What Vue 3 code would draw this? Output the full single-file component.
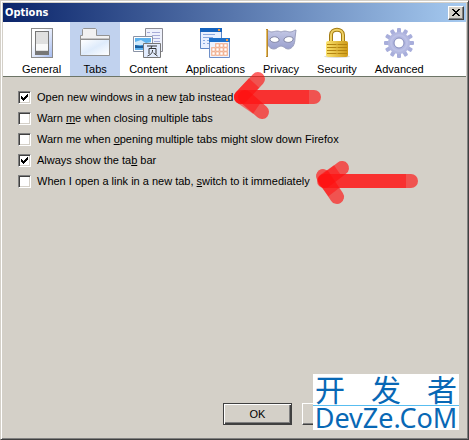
<template>
  <div class="window">
    <header class="titlebar">
      <h1>Options</h1>
      <button class="close" type="button" aria-label="Close">
        <svg width="8" height="7" viewBox="0 0 8 7" shape-rendering="crispEdges">
          <path d="M0 0h2v1h1v1h2V1h1V0h2v1H7v1H6v1H5v1h1v1h1v1h1v1H6V6H5V5H3v1H2v1H0V6h1V5h1V4h1V3H2V2H1V1H0z" fill="#000" />
        </svg>
      </button>
    </header>

    <nav class="toolbar">
      <button
        v-for="tab in tabs"
        :key="tab"
        type="button"
        class="tab"
        :class="{ active: tab === current }"
        @click="current = tab"
      >
        <svg v-if="tab === 'General'" class="icon" viewBox="0 0 32 32">
          <defs>
            <linearGradient id="plate" x1="0" y1="0" x2="1" y2="1">
              <stop offset="0.3" stop-color="#fff" />
              <stop offset="1" stop-color="#a3baf0" />
            </linearGradient>
          </defs>
          <rect x="5.5" y="1.5" width="21" height="29" fill="url(#plate)" stroke="#8c8c8c" />
          <rect x="9.5" y="4.5" width="13" height="23" fill="#e0e0e0" stroke="#777" />
          <path d="M10 17h12v6H10z" fill="#fafafa" />
          <path d="M10 24h13v4H10z" fill="#777" />
        </svg>

        <svg v-else-if="tab === 'Tabs'" class="icon" viewBox="0 0 32 32">
          <defs>
            <linearGradient id="folder" x1="0" y1="0" x2="1" y2="1">
              <stop offset="0" stop-color="#fff" />
              <stop offset="0.5" stop-color="#deebfb" />
              <stop offset="1" stop-color="#fff" />
            </linearGradient>
          </defs>
          <path d="M1.5 28.5V8.5h2v-6l1-1h12l1 1v6h13v20z" fill="#f1f1f1" stroke="#939393" />
          <path d="M2 13h28v15H2z" fill="url(#folder)" />
          <path d="M2 11.5h28" stroke="#c4c4c4" />
          <path d="M2 12.5h28" stroke="#8e8e8e" />
        </svg>

        <svg v-else-if="tab === 'Content'" class="icon" viewBox="0 0 32 32">
          <path d="M13.5 1.5h17v23h-17z" fill="#eef1fc" stroke="#8b8b93" />
          <path d="M15 5.5h3m2 0h8M20 8.5h8M16 11.5h12M22 14.5h6" stroke="#a7acd8" />
          <path d="M1.5 9.5h19v15h-19z" fill="#fff" stroke="#8a93a5" />
          <path d="M3 11h16v12H3z" fill="#5db2ee" />
          <path d="M3 15l6-2 5 3 5-1v3H3z" fill="#cfeafc" />
          <path d="M3 18l5 1 5-1 6 1v2H3z" fill="#1a5d9c" />
          <path d="M11.5 16.5h17v14h-17z" fill="#e1ebfd" stroke="#777" />
          <path d="M15 19h10M20 19l-1 2M17 27v-5.5h7V27M20.5 23c0 3-1 4-5 6M21.5 26l4 3" fill="none" stroke="#333" />
        </svg>

        <svg v-else-if="tab === 'Applications'" class="icon" viewBox="0 0 32 32">
          <path d="M1.5 1.5h21v20h-21z" fill="#e8f0ff" stroke="#5d87c7" />
          <path d="M1 1h22v4H1z" fill="#1462bd" />
          <path d="M4 7.5h12M4 10.5h10M4 13.5h2m2 0h3M4 16.5h2m2 0h3" stroke="#8aa9df" />
          <path d="M10.5 11.5h20v19h-20z" fill="#edf3ff" stroke="#6e8fc8" />
          <path d="M10 11h21v4H10z" fill="#1c70ca" />
          <path d="M19 2h2v2h-2zM27 12h2v2h-2z" fill="#f59b42" />
          <path d="M12 20h4v-4h13v13H12z" fill="#f3c4ac" />
          <path d="M17 17h3v3h-3zM21 17h3v3h-3zM25 17h3v3h-3zM13 21h3v3h-3zM17 21h3v3h-3zM21 21h3v3h-3zM25 21h3v3h-3zM13 25h3v3h-3zM17 25h3v3h-3zM21 25h3v3h-3zM25 25h3v3h-3z" fill="#fff" stroke="#ee9f78" stroke-width="0.5" />
        </svg>

        <svg v-else-if="tab === 'Privacy'" class="icon" viewBox="0 0 32 32">
          <defs>
            <linearGradient id="mask" x1="0" y1="0" x2="0" y2="1">
              <stop offset="0" stop-color="#c5c9e6" />
              <stop offset="1" stop-color="#999fcd" />
            </linearGradient>
          </defs>
          <path d="M2 5C2 3 4 4 6 5c3 0 6-2 10 0 4-2 7 0 9 0 3 0 4-2 6-2 0 3-1 5-1 8 0 7-3 11-7 11-3 0-4-3-7-3s-4 3-7 3C4 22 2 17 2 12z" fill="url(#mask)" stroke="#9b9fbd" />
          <path d="M5 12c2-3 7-3 9 0v2c-3 2-7 2-9-1zm14 0c2-3 7-3 9-1v2c-2 3-6 3-9 1z" fill="#fff" stroke="#8286a5" />
          <path d="M2 2v28" stroke="#b8872f" stroke-width="2" />
          <path d="M1.5 3v26" stroke="#e6bf62" />
        </svg>

        <svg v-else-if="tab === 'Security'" class="icon" viewBox="0 0 32 32">
          <defs>
            <linearGradient id="brass">
              <stop offset="0" stop-color="#fbe26d" />
              <stop offset="1" stop-color="#cf9a17" />
            </linearGradient>
          </defs>
          <ellipse cx="16" cy="29.5" rx="13" ry="1.5" fill="#ddd" />
          <path d="M10 16V8c0-7 12-7 12 0v8" fill="none" stroke="#a47c12" stroke-width="4" />
          <path d="M10 16V8c0-7 12-7 12 0v8" fill="none" stroke="#f0d266" stroke-width="2" />
          <rect x="5" y="14" width="22" height="16" rx="2" fill="url(#brass)" />
          <path d="M6 17.5h20M6 20.5h20M6 23.5h20M6 26.5h20" stroke="#b58511" />
          <path d="M16 16v12" stroke="#e0b941" />
        </svg>

        <svg v-else class="icon" viewBox="0 0 32 32">
          <g fill="#a8aedb">
            <rect v-for="n in 6" :key="n" x="14" y="1" width="4" height="30" rx="1" :transform="`rotate(${n * 30} 16 16)`" />
          </g>
          <circle cx="16" cy="16" r="11" fill="#b3b8e0" />
          <circle cx="16" cy="16" r="8" fill="none" stroke="#bcc1e6" stroke-width="2" />
          <circle cx="16" cy="16" r="5" fill="#fff" stroke="#858cbd" />
        </svg>
        <span>{{ tab }}</span>
      </button>
    </nav>

    <main class="options">
      <label v-for="option in options" :key="option.key + option.before" class="option">
        <input v-model="option.checked" type="checkbox" />
        <span>{{ option.before }}<u>{{ option.key }}</u>{{ option.after }}</span>
      </label>
    </main>

    <footer class="actions">
      <button type="button" class="default">OK</button>
      <button type="button" aria-label="Cancel"></button>
    </footer>

    <svg class="marks" width="469" height="220" viewBox="0 0 469 220">
      <g fill="none" stroke="#ff1010" stroke-width="14">
        <g stroke-opacity="0.65" stroke-linecap="round">
          <path d="M241 97H314" />
          <path d="M258 79L241 97" />
          <path d="M245 97L262 112" />
          <path d="M324 181H411" />
          <path d="M342 168L325 181" />
          <path d="M323 176L337 197" />
        </g>
        <g stroke-opacity="0.5" stroke-linejoin="round">
          <path d="M241 97H309M254 83L241 97L257 108" />
          <path d="M324 181H406M338 171L325 180L334 192" />
        </g>
      </g>
    </svg>

    <div class="watermark">
      <div class="cjk"><span>开</span><span>发</span><span>者</span></div>
      <div class="latin">DevZe.CoM</div>
    </div>
  </div>
</template>

<script setup>
import { ref } from 'vue'

const tabs = ['General', 'Tabs', 'Content', 'Applications', 'Privacy', 'Security', 'Advanced']
const current = ref('Tabs')

// key is the underlined access key of each label
const options = ref([
  { before: 'Open new windows in a new ', key: 't', after: 'ab instead', checked: true },
  { before: 'Warn ', key: 'm', after: 'e when closing multiple tabs', checked: false },
  { before: 'Warn me when ', key: 'o', after: 'pening multiple tabs might slow down Firefox', checked: false },
  { before: 'Always show the ta', key: 'b', after: ' bar', checked: true },
  { before: 'When I open a link in a new tab, ', key: 's', after: 'witch to it immediately', checked: false },
])
</script>

<style>
body {
  margin: 0;
  background: #d4d0c8;
}
</style>

<style scoped>
.window {
  position: relative;
  box-sizing: border-box;
  min-height: 100vh;
  display: flex;
  flex-direction: column;
  padding: 1px;
  border: 1px solid;
  border-color: #d4d0c8 #404040 #404040 #d4d0c8;
  box-shadow: inset 1px 1px #fff, inset -1px -1px #808080;
  background: #d4d0c8;
  color: #000;
  font-family: 'Liberation Sans', Arial, sans-serif;
  font-size: 11px;
}

button {
  font: inherit;
  color: inherit;
}

.titlebar {
  display: flex;
  align-items: center;
  justify-content: space-between;
  height: 19px;
  margin: 1px 1px 0;
  padding: 0 2px;
  background: linear-gradient(90deg, #0a246a, #a6caf0);
}

.titlebar h1 {
  margin: 0;
  color: #fff;
  font-family: 'DejaVu Sans Condensed', 'DejaVu Sans', sans-serif;
  font-size: 11px;
  line-height: 19px;
}

.close {
  display: flex;
  align-items: center;
  justify-content: center;
  width: 16px;
  height: 14px;
  padding: 0;
  border: 1px solid;
  border-color: #fff #404040 #404040 #fff;
  box-shadow: inset -1px -1px #808080;
  background: #d4d0c8;
}

.toolbar {
  display: flex;
  height: 54px;
  margin: 0 1px;
  padding-left: 10px;
  border-bottom: 1px solid #6d7567;
  background: #fff;
}

.tab {
  display: flex;
  flex-direction: column;
  align-items: center;
  gap: 3px;
  padding: 5px 9px 0;
  border: 0;
  background: transparent;
  line-height: 14px;
}

.tab.active {
  background: #c1d2ee;
}

.icon {
  display: block;
  flex: none;
  width: 32px;
  height: 32px;
}

.options {
  flex: 1;
  display: flex;
  flex-direction: column;
  align-items: flex-start;
  gap: 7px;
  padding: 13px 16px;
}

.option {
  display: flex;
  align-items: center;
  gap: 6px;
  line-height: 14px;
}

.option u {
  text-underline-offset: 1px;
}

.option input {
  appearance: none;
  width: 13px;
  height: 13px;
  margin: 0;
  border: 1px solid;
  border-color: #808080 #fff #fff #808080;
  box-shadow: inset 1px 1px #404040, inset -1px -1px #d4d0c8;
  background: #fff;
}

.option input:checked {
  background: #fff url("data:image/svg+xml,%3Csvg xmlns='http://www.w3.org/2000/svg' viewBox='0 0 7 7' shape-rendering='crispEdges'%3E%3Cpath d='M0 2h1v1h1v1h1V3h1V2h1V1h1V0h1v3H6v1H5v1H4v1H3v1H2V6H1V5H0z'/%3E%3C/svg%3E") center / 7px 7px no-repeat;
}

.actions {
  display: flex;
  justify-content: flex-end;
  gap: 10px;
  padding: 0 96px 13px 0;
}

.actions button {
  width: 69px;
  height: 22px;
  padding: 0;
  border: 1px solid;
  border-color: #fff #404040 #404040 #fff;
  box-shadow: inset -1px -1px #808080;
  background: #d4d0c8;
}

.actions .default {
  border-color: #404040;
  box-shadow: inset 1px 1px #fff, inset -1px -1px #404040, inset -2px -2px #808080;
}

.marks {
  position: absolute;
  top: -1px;
  left: -1px;
  pointer-events: none;
}

.watermark {
  position: absolute;
  right: 9px;
  bottom: 9px;
  width: 146px;
  height: 56px;
  background: #fff;
  color: #0868b5;
}

.cjk {
  display: flex;
  justify-content: space-between;
  height: 31px;
  padding: 0 2px;
  border-bottom: 1px solid #58bdf0;
  font: 30px/28px 'Noto Sans CJK SC', sans-serif;
}

.latin {
  font: 27px/24px 'Noto Sans', sans-serif;
  text-align: center;
}
</style>
